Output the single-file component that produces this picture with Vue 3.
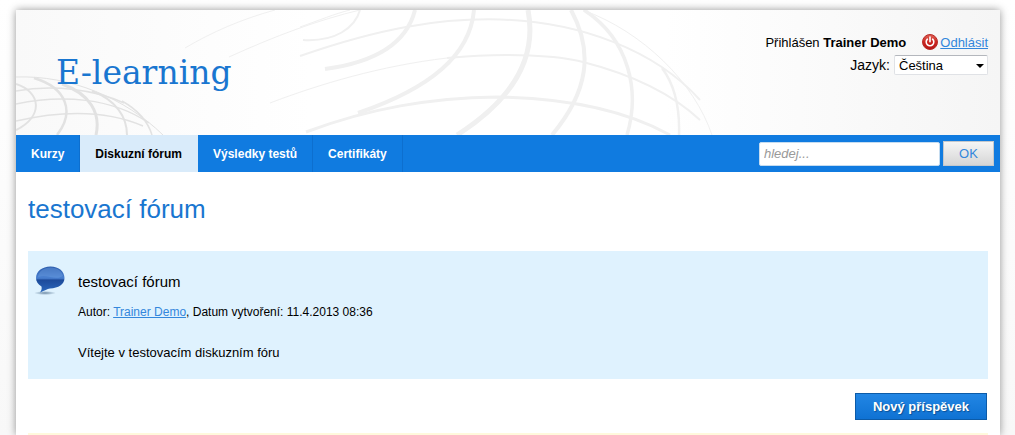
<script setup>
import { ref } from 'vue'

const tabs = [
  { label: 'Kurzy', active: false },
  { label: 'Diskuzní fórum', active: true },
  { label: 'Výsledky testů', active: false },
  { label: 'Certifikáty', active: false },
]
const language = ref('cs')
const query = ref('')
</script>

<template>
  <div class="page">
    <div class="sheet">
      <header class="header">
        <svg class="globes" viewBox="16 10 700 125" width="700" height="125" fill="none" aria-hidden="true">
          <g stroke="#e2e2e2">
            <path stroke-width="1" d="M16 77C70 75 125 98 163 135" />
            <path stroke-width="1.5" d="M16 91C54 84 96 90 124 103" />
            <path stroke-width="1.5" d="M16 104C62 94 112 98 149 123" />
            <path stroke-width="1.5" d="M16 121C60 111 106 110 143 126" />
            <path stroke-width="2" d="M16 84C41 92 44 116 16 130" />
            <path stroke-width="2.500" d="M34 78C67 88 75 112 57 135" />
            <path stroke-width="3" d="M62 84C90 94 101 113 96 135" />
            <path stroke-width="2" d="M92 91C116 100 127 117 127 135" />
            <path stroke-width="1.5" d="M122 101C138 110 148 122 152 135" />
          </g>
          <g stroke="#f0f0f0">
            <path stroke-width="1" d="M185 48C212 32 242 19 275 10" />
            <path stroke-width="1" d="M229 57C275 36 318 20 360 10" />
            <path stroke-width="1" d="M300 27C320 20 334 14 350 10" />
            <path stroke-width="1" d="M270 103C320 84 380 66 447 58" />
            <path stroke-width="2" d="M300 56C380 28 440 18 500 19.500C580 22 655 50 700 100" />
            <path stroke-width="2" d="M447 58C510 52 560 56 583 62C630 74 670 92 700 120" />
            <path stroke-width="3" d="M306 132C370 108 430 98 497 97C565 98 625 110 670 135" />
            <path stroke-width="2" d="M303 40C335 42 355 28 360 10" />
            <path stroke-width="4" d="M325 69C377 62 407 42 415 10" />
            <path stroke-width="4" d="M358 113C431 88 470 55 474 10" />
            <path stroke-width="5" d="M457 135C515 98 537 56 528 10" />
            <path stroke-width="4" d="M552 135C588 92 594 52 571 10" />
            <path stroke-width="3.500" d="M627 135C640 92 630 40 584 10" />
            <path stroke-width="2.500" d="M679 135C680 106 674 84 662 68" />
            <path stroke-width="1" d="M583 10C643 32 694 82 712 135" />
          </g>
        </svg>
        <a class="logo" href="#">E-learning</a>
        <div class="account">
          <div class="account-row">
            <span class="signed">Přihlášen <strong>Trainer Demo</strong></span>
            <svg class="power" viewBox="0 0 16 16" width="16" height="16" aria-hidden="true">
              <defs>
                <linearGradient id="red" x1="0" y1="0" x2="0" y2="1">
                  <stop offset="0" stop-color="#df6257" />
                  <stop offset="0.5" stop-color="#cc2620" />
                  <stop offset="1" stop-color="#b41415" />
                </linearGradient>
              </defs>
              <circle cx="8" cy="8" r="7.5" fill="url(#red)" stroke="#b82c27" />
              <path d="M5.4 5.2a3.8 3.8 0 1 0 5.2 0M8 3v4.8" fill="none" stroke="#fff" stroke-width="1.6" stroke-linecap="round" />
            </svg>
            <a href="#">Odhlásit</a>
          </div>
          <div class="account-row">
            <label for="language">Jazyk:</label>
            <span class="select">
              <select id="language" v-model="language">
                <option value="cs">Čeština</option>
                <option value="en">English</option>
              </select>
              <svg class="arrow" viewBox="0 0 8 4" width="8" height="4" aria-hidden="true"><path d="M0 0h8L4 4z" fill="#000" /></svg>
            </span>
          </div>
        </div>
      </header>

      <nav class="bar">
        <a v-for="tab in tabs" :key="tab.label" href="#" class="tab" :class="{ active: tab.active }">{{ tab.label }}</a>
        <form class="search" @submit.prevent>
          <input v-model="query" type="text" placeholder="hledej..." aria-label="hledej..." />
          <button type="submit">OK</button>
        </form>
      </nav>

      <main class="content">
        <h1>testovací fórum</h1>
        <article class="post">
          <svg class="bubble" viewBox="0 0 32 30" width="32" height="30" aria-hidden="true">
            <defs>
              <linearGradient id="blue" x1="0" y1="0" x2="0" y2="1">
                <stop offset="0" stop-color="#2d5dad" />
                <stop offset="0.45" stop-color="#4a80d0" />
                <stop offset="0.52" stop-color="#1d4b9b" />
                <stop offset="1" stop-color="#2b68bd" />
              </linearGradient>
              <radialGradient id="shade">
                <stop offset="0" stop-color="#547390" stop-opacity="0.8" />
                <stop offset="1" stop-color="#547390" stop-opacity="0" />
              </radialGradient>
            </defs>
            <ellipse cx="11" cy="27" rx="11" ry="2" fill="url(#shade)" />
            <path d="M16.500 0.500C25 0.500 30.500 5.500 30.500 12S24.500 22 16 22.500C13 23 11 24.500 6 26.500C7.500 24.500 8 22.500 7.500 20.500C4 18.500 2 15.500 2 12C2 5.500 8 0.500 16.500 0.500Z" fill="url(#blue)" />
            <path d="M4 11C5 5 10 1.500 16.500 1.500C23 1.500 28 5 29 10C22 14.500 14 8.500 4 11Z" fill="#82b4f0" fill-opacity="0.3" />
          </svg>
          <div class="post-body">
            <h2>testovací fórum</h2>
            <p class="meta">Autor: <a href="#">Trainer Demo</a>, Datum vytvoření: 11.4.2013 08:36</p>
            <p class="text">Vítejte v testovacím diskuzním fóru</p>
          </div>
        </article>
        <div class="actions">
          <button type="button" class="primary">Nový příspěvek</button>
        </div>
        <div class="thread"></div>
      </main>
    </div>
  </div>
</template>

<style>
body {
  margin: 0;
}
</style>

<style scoped>
.page {
  box-sizing: border-box;
  display: flex;
  min-height: 100vh;
  padding: 10px 15px 0 16px;
  overflow: hidden;
  background: linear-gradient(#ffffff, #f8f8f8);
  font-family: "Liberation Sans", Arial, sans-serif;
  font-size: 13px;
  color: #000;
}

.sheet {
  flex: 1;
  display: flex;
  flex-direction: column;
  min-width: 0;
  background: #fff;
  box-shadow: 0 0 8px rgba(0, 0, 0, 0.42);
}

a {
  color: #3387dc;
}

.header {
  position: relative;
  display: flex;
  justify-content: space-between;
  align-items: flex-start;
  height: 125px;
  overflow: hidden;
  background: linear-gradient(90deg, #f9f9f9, #ffffff 30%, #ffffff 66%, #f5f5f5);
}

.globes {
  position: absolute;
  left: 0;
  top: 0;
}

.logo {
  position: relative;
  padding: 43px 0 0 40px;
  font-family: "DejaVu Serif", serif;
  font-size: 33px;
  line-height: 40px;
  color: #1976d0;
  text-decoration: none;
}

.account {
  position: relative;
  display: flex;
  flex-direction: column;
  gap: 5px;
  padding: 23px 12px 0 0;
}

.account-row {
  display: flex;
  align-items: center;
  justify-content: flex-end;
  height: 18px;
}

.signed {
  margin-right: 16px;
}

.power {
  margin-right: 2px;
}

label {
  margin-right: 4px;
  font-size: 14px;
}

.select {
  position: relative;
  display: flex;
}

select {
  appearance: none;
  width: 94px;
  height: 20px;
  padding: 0 20px 0 4px;
  border: 1px solid #e0e2e6;
  border-top-color: #b4b7bd;
  border-radius: 2px;
  background: #fff;
  font: inherit;
  color: #000;
}

.arrow {
  position: absolute;
  right: 4px;
  top: 9px;
  pointer-events: none;
}

.bar {
  display: flex;
  height: 37px;
  background: #107be0;
}

.tab {
  padding: 0 15px;
  border-right: 1px solid #0d6fcf;
  font-size: 12px;
  font-weight: bold;
  line-height: 38px;
  color: #fff;
  text-decoration: none;
}

.tab.active {
  border-color: #d9ebfa;
  background: #d9ebfa;
  color: #000;
}

.search {
  display: flex;
  align-items: center;
  gap: 3px;
  margin-left: auto;
  padding-right: 6px;
}

.search input {
  box-sizing: border-box;
  width: 181px;
  height: 24px;
  padding: 0 4px;
  border: 1px solid #c5dcf0;
  border-radius: 2px;
  background: #fff;
  font: inherit;
}

.search input::placeholder {
  font-style: italic;
  color: #999;
}

.search button {
  width: 51px;
  height: 25px;
  padding: 0;
  border: 1px solid #c4c8cc;
  background: linear-gradient(#f5f5f5, #d6d6d6);
  font: inherit;
  color: #3387dc;
}

.content {
  flex: 1;
  display: flex;
  flex-direction: column;
  padding: 22px 12px 0;
}

h1 {
  margin: 0 0 27px;
  font-size: 26px;
  font-weight: normal;
  line-height: 30px;
  color: #1976d0;
}

.post {
  display: flex;
  gap: 12px;
  padding: 15px 6px 16px;
  background: #dff2fe;
}

.bubble {
  flex: none;
}

.post-body {
  padding-top: 6px;
}

h2 {
  margin: 0 0 10px;
  font-size: 15px;
  font-weight: normal;
  line-height: 20px;
}

.meta {
  margin: 0 0 21px;
  font-size: 12px;
  line-height: 20px;
}

.text {
  margin: 0;
  line-height: 20px;
}

.actions {
  display: flex;
  justify-content: flex-end;
  padding: 14px 1px 13px 0;
}

.primary {
  width: 132px;
  height: 27px;
  padding: 0;
  border: 1px solid #0c5ba8;
  background: linear-gradient(#2286e4, #0f72d3);
  font: inherit;
  font-weight: bold;
  color: #fff;
  text-shadow: 1px 1px 1px #0b4f94;
}

.thread {
  flex: 1;
  min-height: 2px;
  background: #fff9dc;
}
</style>
